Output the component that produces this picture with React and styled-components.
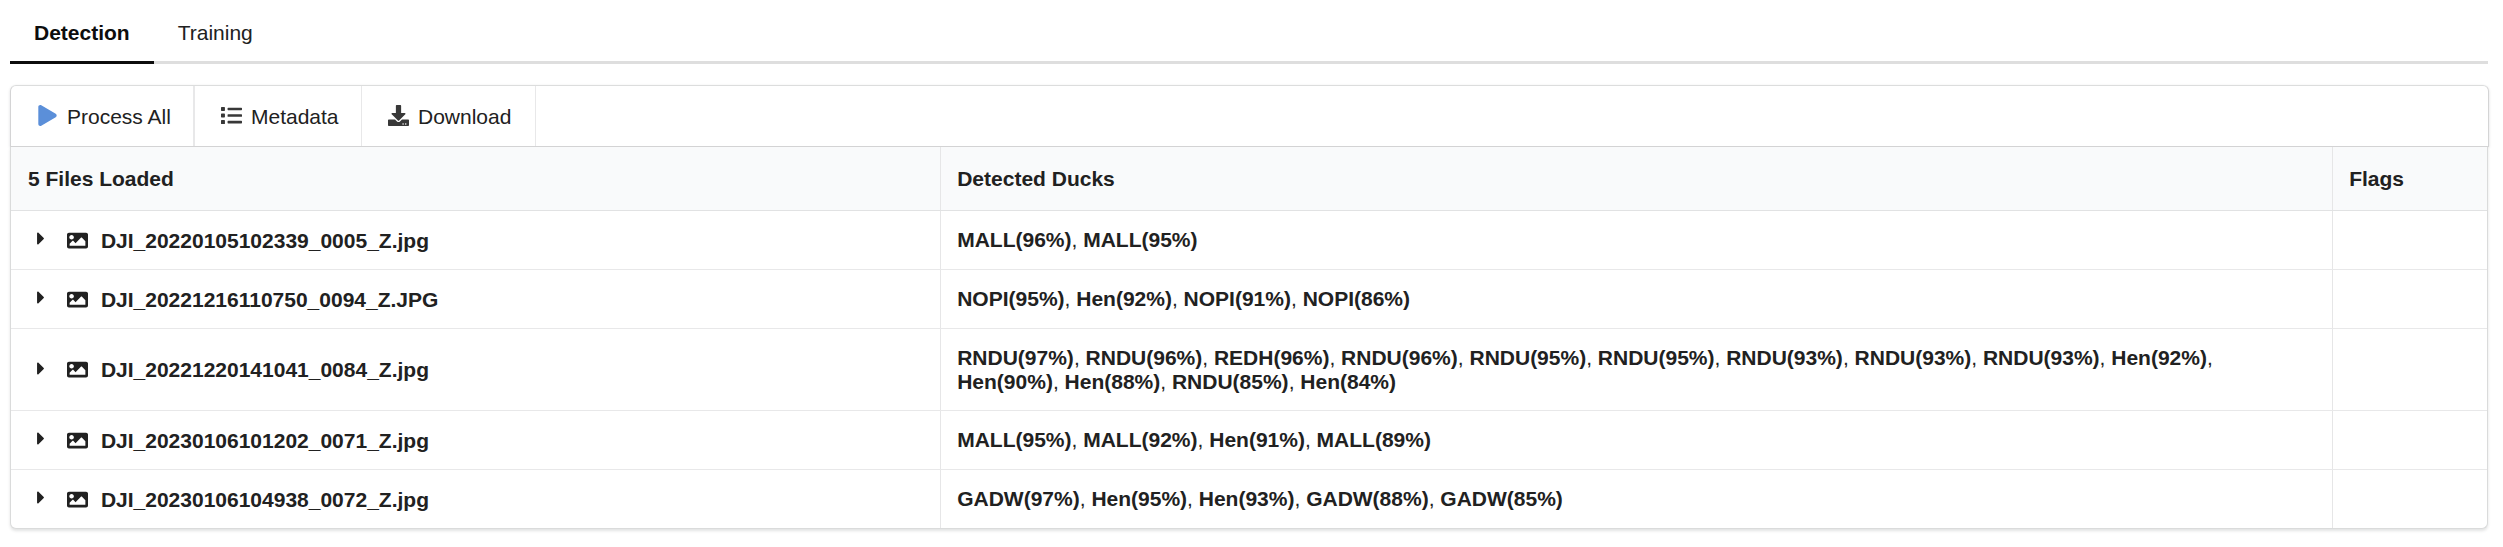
import React from "react";
import styled, { createGlobalStyle } from "styled-components";
import { FaPlay, FaList, FaDownload, FaImage, FaCaretRight } from "react-icons/fa";

const GlobalStyle = createGlobalStyle`
  * { box-sizing: border-box; }
  body {
    margin: 0;
    background: #fff;
    color: #212121;
    font: 21px/24px "Liberation Sans", Arial, sans-serif;
  }
`;

const Page = styled.main`
  width: 2503px;
  height: 547px;
  padding: 0 14px 0 10px;
`;

const Tabs = styled.nav`
  display: flex;
  width: 2478px;
  height: 64px;
  border-bottom: 3px solid #dedede;
`;

const Tab = styled.a`
  height: 64px;
  padding: 21px 24px 0;
  color: ${(p) => (p.$active ? "#0d0d0d" : "#212121")};
  font-weight: ${(p) => (p.$active ? 700 : 400)};
  border-bottom: 3px solid ${(p) => (p.$active ? "#0d0d0d" : "transparent")};
`;

const Toolbar = styled.div`
  display: flex;
  width: 2479px;
  height: 62px;
  margin-top: 21px;
  border: 1px solid #d4d4d5;
  border-top-color: #dcdddd;
  border-radius: 6px 6px 0 0;
  box-shadow: 0 1px 3px rgba(34, 36, 38, 0.15);
`;

const ToolButton = styled.a`
  display: flex;
  align-items: center;
  width: ${(p) => p.$width}px;
  padding: 2px 0 0 24px;
  border-right: ${(p) => p.$divider}px solid #e8e8e9;
`;

const IconBox = styled.span`
  display: flex;
  justify-content: center;
  flex: none;
  width: 24.8px;
  margin: -3px 7.2px 0 0;
  color: ${(p) => p.$color || "#383838"};
  svg { display: block; }
`;

const Table = styled.section`
  position: relative;
  width: 2478px;
  border: 1px solid #dadbdb;
  border-top: 0;
  border-radius: 0 0 6px 6px;
  background: #fff;
  box-shadow: 0 2px 3px rgba(34, 36, 38, 0.13);
`;

const Row = styled.div`
  display: grid;
  grid-template-columns: 929px 1392px 1fr;
  height: ${(p) => p.$height}px;
  background: ${(p) => (p.$head ? "#f9fafb" : "transparent")};
  font-weight: ${(p) => (p.$head ? 700 : 400)};
  border-bottom: 1px solid ${(p) => (p.$head ? "#e1e2e3" : "#e8e8e9")};
  &:last-child { border-bottom: 0; }
`;

const Cell = styled.div`
  display: flex;
  align-items: center;
  padding: 0 16px 0 17px;
  & + & { border-left: 1px solid #e6e6e7; padding-left: 16.2px; }
`;

const FileCell = styled(Cell)`
  padding: 1px 16px 0 25.6px;
  font-weight: 700;
`;

const Caret = styled(FaCaretRight)`
  width: 8px;
  height: 21px;
  flex: none;
  margin: -4px 22px 0 0;
`;

const Picture = styled(FaImage)`
  width: 21px;
  height: 21px;
  flex: none;
  margin: -1px 13.3px 0 0;
`;

const Ducks = styled.div`
  max-width: 1300px;
`;

const files = [
  { name: "DJI_20220105102339_0005_Z.jpg", height: 59, ducks: ["MALL(96%)", "MALL(95%)"] },
  { name: "DJI_20221216110750_0094_Z.JPG", height: 59, ducks: ["NOPI(95%)", "Hen(92%)", "NOPI(91%)", "NOPI(86%)"] },
  {
    name: "DJI_20221220141041_0084_Z.jpg",
    height: 82,
    ducks: [
      "RNDU(97%)", "RNDU(96%)", "REDH(96%)", "RNDU(96%)", "RNDU(95%)", "RNDU(95%)", "RNDU(93%)",
      "RNDU(93%)", "RNDU(93%)", "Hen(92%)", "Hen(90%)", "Hen(88%)", "RNDU(85%)", "Hen(84%)",
    ],
  },
  { name: "DJI_20230106101202_0071_Z.jpg", height: 59, ducks: ["MALL(95%)", "MALL(92%)", "Hen(91%)", "MALL(89%)"] },
  { name: "DJI_20230106104938_0072_Z.jpg", height: 58, ducks: ["GADW(97%)", "Hen(95%)", "Hen(93%)", "GADW(88%)", "GADW(85%)"] },
];

export default function App() {
  return (
    <Page>
      <GlobalStyle />
      <Tabs>
        <Tab $active>Detection</Tab>
        <Tab>Training</Tab>
      </Tabs>
      <Toolbar>
        <ToolButton $width={184} $divider={2}>
          <IconBox $color="#5b8fd9"><FaPlay size={21} /></IconBox>Process All
        </ToolButton>
        <ToolButton $width={167} $divider={1}>
          <IconBox><FaList size={21} /></IconBox>Metadata
        </ToolButton>
        <ToolButton $width={174} $divider={1}>
          <IconBox><FaDownload size={21} /></IconBox>Download
        </ToolButton>
      </Toolbar>
      <Table>
        <Row $head $height={64}>
          <Cell>5 Files Loaded</Cell>
          <Cell>Detected Ducks</Cell>
          <Cell>Flags</Cell>
        </Row>
        {files.map((file) => (
          <Row key={file.name} $height={file.height}>
            <FileCell>
              <Caret />
              <Picture />
              {file.name}
            </FileCell>
            <Cell>
              <Ducks>
                {file.ducks.map((duck, i) => (
                  <React.Fragment key={i}>
                    {i > 0 && ", "}
                    <b>{duck}</b>
                  </React.Fragment>
                ))}
              </Ducks>
            </Cell>
            <Cell />
          </Row>
        ))}
      </Table>
    </Page>
  );
}
